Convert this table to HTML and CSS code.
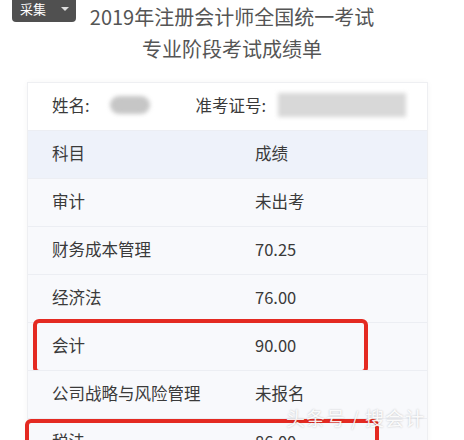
FILE: index.html
```html
<!DOCTYPE html>
<html lang="zh-CN">
  <head>
    <meta charset="UTF-8" />
    <meta name="viewport" content="width=device-width, initial-scale=1.0" />
    <title>成绩单</title>
    <link rel="stylesheet" href="styles.css">
  </head>
  <body>
    <div class="collect-tag">采集 <span class="caret"></span></div>
    <div class="page-title">
      <div>2019年注册会计师全国统一考试</div>
      <div>专业阶段考试成绩单</div>
    </div>
    <div class="score-card">
      <div class="info-row">
        <div class="info-item">姓名:<span class="blur blur-name"></span></div>
        <div class="info-item id-item">准考证号:<span class="blur blur-id"></span></div>
      </div>
      <div class="score-row head-row">
        <div class="col-subject">科目</div>
        <div class="col-score">成绩</div>
      </div>
      <div class="score-row">
        <div class="col-subject">审计</div>
        <div class="col-score">未出考</div>
      </div>
      <div class="score-row">
        <div class="col-subject">财务成本管理</div>
        <div class="col-score">70.25</div>
      </div>
      <div class="score-row">
        <div class="col-subject">经济法</div>
        <div class="col-score">76.00</div>
      </div>
      <div class="score-row">
        <div class="col-subject">会计</div>
        <div class="col-score">90.00</div>
        <div class="red-mark mark-one"></div>
      </div>
      <div class="score-row">
        <div class="col-subject">公司战略与风险管理</div>
        <div class="col-score">未报名</div>
      </div>
      <div class="score-row">
        <div class="col-subject">税法</div>
        <div class="col-score">86.00</div>
        <div class="red-mark mark-two"></div>
        <div class="watermark">头条号 / 搜会计</div>
      </div>
    </div>
  </body>
</html>
```

FILE: styles.css
```css
body {
  margin: 0;
  background: #ffffff;
  font-family: "Noto Sans CJK SC", "Noto Sans", sans-serif;
  color: #3a3a3a;
  overflow: hidden;
  position: relative;
}

/* small grey tag in the corner */
.collect-tag {
  position: absolute;
  left: 12px;
  top: 0;
  width: 64px;
  height: 22px;
  box-sizing: border-box;
  padding-left: 8px;
  background: #505050;
  border-radius: 0 0 4px 4px;
  color: #fff;
  font-size: 13px;
  line-height: 18px;
}
.caret {
  display: inline-block;
  margin-left: 12px;
  vertical-align: 3px;
  border-left: 4px solid transparent;
  border-right: 4px solid transparent;
  border-top: 4px solid #ddd;
}

.page-title {
  padding-top: 1px;
  text-align: center;
  font-size: 20px;
  line-height: 32px;
  color: #555;
}

.score-card {
  margin: 17px 36px 0 27px;
  border: 1px solid #eeeff2;
  box-shadow: 0 0 6px rgba(0, 0, 0, 0.04);
}

.info-row {
  display: flex;
  height: 47px;
  box-sizing: border-box;
  padding: 0 0 3px 24px;
  align-items: center;
  font-size: 16.5px;
  background: #fff;
}
.info-item {
  display: flex;
  align-items: center;
}
.id-item {
  margin-left: 46px;
}
.blur {
  display: inline-block;
  background: #c6c6c6;
  filter: blur(2px);
}
.blur-name {
  width: 40px;
  height: 18px;
  margin-left: 20px;
  border-radius: 9px;
}
.blur-id {
  width: 128px;
  height: 24px;
  margin-left: 12px;
  background: #d8d8d8;
}

.score-row {
  position: relative;
  display: flex;
  align-items: center;
  height: 48px;
  padding-bottom: 4px;
  font-size: 16.5px;
  background: #f8f9fc;
  border-top: 1px solid #eceef3;
  box-sizing: border-box;
}
.head-row {
  background: #eef2fa;
}
.col-subject {
  width: 203px;
  padding-left: 24px;
}
.col-score {
  flex: 1;
}

.red-mark {
  position: absolute;
  border: 4px solid #e42a22;
  border-radius: 6px;
}
.mark-one {
  left: 5px;
  top: -4px;
  width: 327px;
  height: 47px;
}
.mark-two {
  left: -3px;
  top: 0;
  width: 346px;
  height: 60px;
}
.watermark {
  position: absolute;
  left: 258px;
  top: -15px;
  font-size: 19px;
  color: rgba(255, 255, 255, 0.92);
  text-shadow: 0 0 2px rgba(0, 0, 0, 0.25);
  letter-spacing: 1px;
}
```
